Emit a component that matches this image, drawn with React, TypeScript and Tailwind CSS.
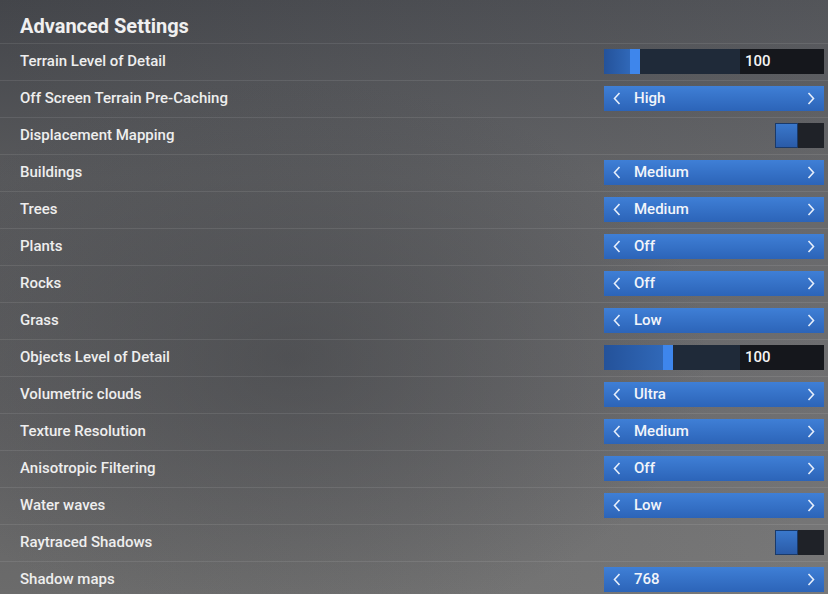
import React from 'react';

type Row =
  | { label: string; kind: 'slider'; pos: number; value: string }
  | { label: string; kind: 'select'; value: string }
  | { label: string; kind: 'toggle' };

const rows: Row[] = [
  { label: 'Terrain Level of Detail', kind: 'slider', pos: 26, value: '100' },
  { label: 'Off Screen Terrain Pre-Caching', kind: 'select', value: 'High' },
  { label: 'Displacement Mapping', kind: 'toggle' },
  { label: 'Buildings', kind: 'select', value: 'Medium' },
  { label: 'Trees', kind: 'select', value: 'Medium' },
  { label: 'Plants', kind: 'select', value: 'Off' },
  { label: 'Rocks', kind: 'select', value: 'Off' },
  { label: 'Grass', kind: 'select', value: 'Low' },
  { label: 'Objects Level of Detail', kind: 'slider', pos: 59, value: '100' },
  { label: 'Volumetric clouds', kind: 'select', value: 'Ultra' },
  { label: 'Texture Resolution', kind: 'select', value: 'Medium' },
  { label: 'Anisotropic Filtering', kind: 'select', value: 'Off' },
  { label: 'Water waves', kind: 'select', value: 'Low' },
  { label: 'Raytraced Shadows', kind: 'toggle' },
  { label: 'Shadow maps', kind: 'select', value: '768' },
];

function Chevron({ dir }: { dir: 'left' | 'right' }) {
  return (
    <svg width="8" height="13" viewBox="0 0 8 13" fill="none">
      <path
        d={dir === 'left' ? 'M6.5 1 L1.5 6.5 L6.5 12' : 'M1.5 1 L6.5 6.5 L1.5 12'}
        stroke="#e6eefb"
        strokeWidth="1.6"
      />
    </svg>
  );
}

function Selector({ value }: { value: string }) {
  return (
    <div className="flex items-center h-[25px] w-[220px] bg-[linear-gradient(to_bottom,#3f7fd6,#2c64b8)] pl-[9px] pr-[9px]">
      <Chevron dir="left" />
      <span className="ml-[13px] flex-1 text-[15px] font-medium text-[#f2f5fa] leading-none">{value}</span>
      <Chevron dir="right" />
    </div>
  );
}

function Slider({ pos, value }: { pos: number; value: string }) {
  return (
    <div className="flex h-[25px] w-[220px]">
      <div className="flex w-[136px] bg-[#1f2a39]">
        <div
          className="h-full bg-[linear-gradient(to_right,#24529a,#3068b8)]"
          style={{ width: pos }}
        />
        <div className="h-full w-[10px] bg-[#3e86ec]" />
      </div>
      <div className="flex-1 flex items-center bg-[#15171c] pl-[5px] text-[15px] font-medium text-[#f4f4f4] leading-none">
        {value}
      </div>
    </div>
  );
}

function Toggle() {
  return (
    <div className="flex h-[25px] w-[49px] bg-[#1f2228]">
      <div className="h-full w-[23px] bg-[linear-gradient(to_bottom,#3a78cc,#2a5ba8)] border border-[#1a3a6a]" />
    </div>
  );
}

export default function App() {
  return (
    <div
      className="w-[828px] h-[594px] overflow-hidden bg-[radial-gradient(ellipse_at_35%_60%,rgba(60,62,66,0.5),transparent_55%),linear-gradient(to_right,rgba(0,0,0,0.04),rgba(255,255,255,0.07)),linear-gradient(to_bottom,#46484d_0%,#5b5c5f_30%,#656567_70%,#6f6f6f_100%)]"
      style={{ fontFamily: 'Roboto, "Noto Sans", sans-serif' }}
    >
      <div className="h-[43px] flex items-center pl-[20px] pt-[9px]">
        <h1 className="text-[20px] font-bold text-[#f0f0f0] leading-none">Advanced Settings</h1>
      </div>
      {rows.map((row) => (
        <div
          key={row.label}
          className="h-[37px] flex items-center justify-between border-t border-[rgba(255,255,255,0.09)] pl-[20px] pr-[4px] pb-[2px]"
        >
          <span className="text-[15px] font-medium text-[#eeeeee] leading-none">{row.label}</span>
          {row.kind === 'select' && <Selector value={row.value} />}
          {row.kind === 'slider' && <Slider pos={row.pos} value={row.value} />}
          {row.kind === 'toggle' && <Toggle />}
        </div>
      ))}
    </div>
  );
}
